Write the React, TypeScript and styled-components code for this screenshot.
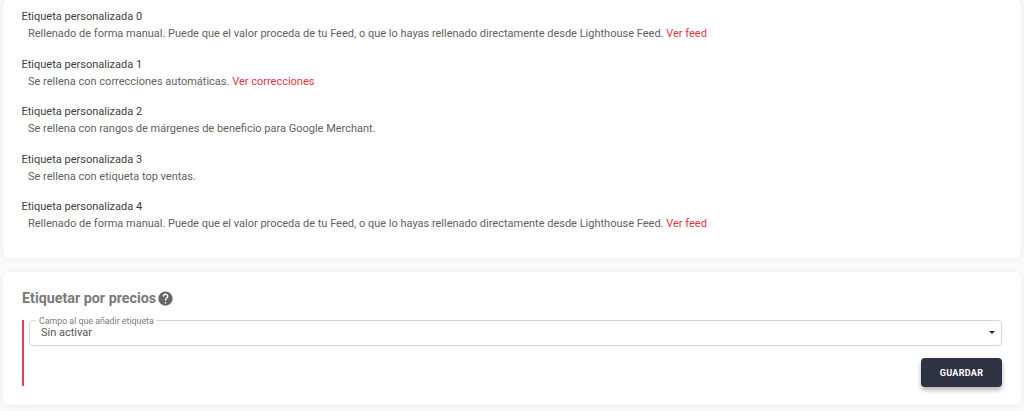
import React from 'react';
import styled, { createGlobalStyle } from 'styled-components';

const GlobalStyle = createGlobalStyle`
    html, body {
        margin: 0;
        padding: 0;
        width: 1024px;
        height: 411px;
        overflow: hidden;
        background: #fafafa;
        font-family: Roboto, "Liberation Sans", sans-serif;
    }
`;

const Page = styled.div`
    display: flex;
    flex-direction: column;
    gap: 14px;
    height: 411px;
    padding: 0 3px;
    box-sizing: border-box;
    overflow: hidden;
`;

const Card = styled.section`
    background: #fff;
    border-radius: 6px;
    box-shadow: 0 1px 6px rgba(0, 0, 0, 0.07);
`;

const LabelsCard = styled(Card)`
    height: 259px;
    margin-top: -1px;
    padding: 10px 18.5px 0;
    box-sizing: border-box;
    display: flex;
    flex-direction: column;
    gap: 15.5px;
`;

const LabelItem = styled.div`
    display: flex;
    flex-direction: column;
    gap: 2px;
`;

const LabelName = styled.div`
    font-size: 11px;
    line-height: 15px;
    color: #3d3d3d;
`;

const LabelText = styled.div<{ $indent: number }>`
    font-size: 11px;
    line-height: 15px;
    color: #616161;
    padding-left: ${({ $indent }) => $indent}px;
`;

const RedLink = styled.a`
    color: #dc3545;
    text-decoration: none;
`;

const PriceCard = styled(Card)`
    height: 133px;
    padding: 17px 19px 0;
    box-sizing: border-box;
`;

const TitleRow = styled.div`
    display: flex;
    align-items: center;
    gap: 1px;
    height: 18px;
`;

const Title = styled.h2`
    margin: 0;
    font-size: 14.3px;
    font-weight: 700;
    color: #7a7a7a;
`;

const Rule = styled.div`
    margin-top: 13px;
    height: 66px;
    border-left: 2px solid #e5404c;
    padding-left: 5px;
`;

const Field = styled.fieldset`
    margin: 0;
    height: 26px;
    box-sizing: border-box;
    padding: 0 6px 2px 11px;
    border: 1px solid #d4d4d4;
    border-radius: 4px;
    display: flex;
    align-items: center;
    justify-content: space-between;
    position: relative;
`;

const FieldLabel = styled.span`
    position: absolute;
    left: 6px;
    top: -5px;
    padding: 0 3px;
    background: #fff;
    font-size: 8.8px;
    line-height: 10px;
    color: #7b7b7b;
`;

const FieldValue = styled.span`
    font-size: 11px;
    color: #555;
`;

const Arrow = styled.span`
    width: 0;
    height: 0;
    border-left: 3.5px solid transparent;
    border-right: 3.5px solid transparent;
    border-top: 3.5px solid #222;
`;

const Actions = styled.div`
    display: flex;
    justify-content: flex-end;
    margin-top: 12px;
`;

const SaveButton = styled.button`
    width: 81px;
    height: 29px;
    border: 0;
    border-radius: 4px;
    background: #2f3243;
    color: #fff;
    font-family: inherit;
    font-size: 9px;
    font-weight: 700;
    letter-spacing: 0.3px;
    box-shadow: 0 3px 5px rgba(0, 0, 0, 0.3);
`;

const HelpIcon = () => (
    <svg width="17" height="17" viewBox="0 0 24 24" fill="#666">
        <path d="M12 2C6.48 2 2 6.48 2 12s4.48 10 10 10 10-4.48 10-10S17.52 2 12 2zm1 17h-2v-2h2v2zm2.07-7.75l-.9.92C13.45 12.9 13 13.5 13 15h-2v-.5c0-1.1.45-2.1 1.17-2.83l1.24-1.26c.37-.36.59-.86.59-1.41 0-1.1-.9-2-2-2s-2 .9-2 2H8c0-2.21 1.79-4 4-4s4 1.79 4 4c0 .88-.36 1.68-.93 2.25z" />
    </svg>
);

const manualText = 'Rellenado de forma manual. Puede que el valor proceda de tu Feed, o que lo hayas rellenado directamente desde Lighthouse Feed.';

const labels = [
    { name: 'Etiqueta personalizada 0', text: manualText, link: 'Ver feed', indent: 6.5 },
    { name: 'Etiqueta personalizada 1', text: 'Se rellena con correcciones automáticas.', link: 'Ver correcciones', indent: 6.5 },
    { name: 'Etiqueta personalizada 2', text: 'Se rellena con rangos de márgenes de beneficio para Google Merchant.', indent: 6.5 },
    { name: 'Etiqueta personalizada 3', text: 'Se rellena con etiqueta top ventas.', indent: 6.5 },
    { name: 'Etiqueta personalizada 4', text: manualText, link: 'Ver feed', indent: 6.5 },
];

const App: React.FC = () => (
    <>
        <GlobalStyle />
        <Page>
            <LabelsCard>
                {labels.map((item) => (
                    <LabelItem key={item.name}>
                        <LabelName>{item.name}</LabelName>
                        <LabelText $indent={item.indent}>
                            {item.text}
                            {item.link && <> <RedLink href="#">{item.link}</RedLink></>}
                        </LabelText>
                    </LabelItem>
                ))}
            </LabelsCard>
            <PriceCard>
                <TitleRow>
                    <Title>Etiquetar por precios</Title>
                    <HelpIcon />
                </TitleRow>
                <Rule>
                    <Field>
                        <FieldLabel>Campo al que añadir etiqueta</FieldLabel>
                        <FieldValue>Sin activar</FieldValue>
                        <Arrow />
                    </Field>
                    <Actions>
                        <SaveButton>GUARDAR</SaveButton>
                    </Actions>
                </Rule>
            </PriceCard>
        </Page>
    </>
);

export default App;
